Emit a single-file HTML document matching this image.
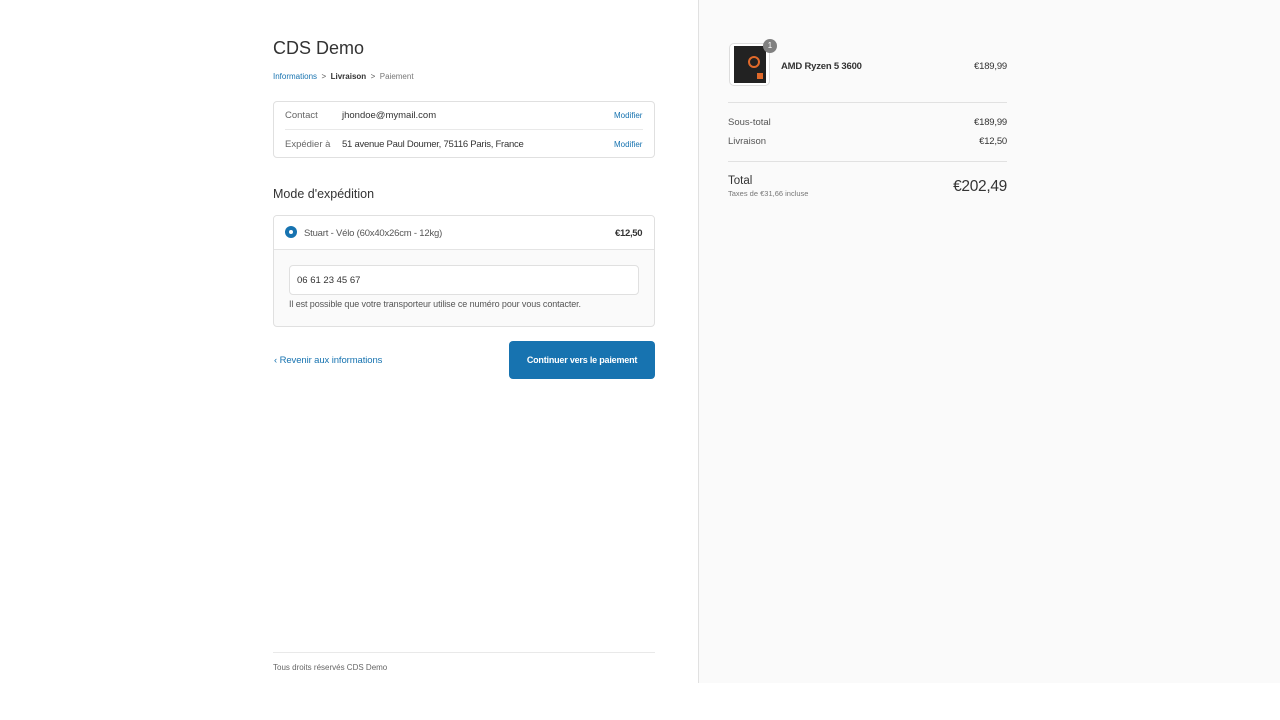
<!DOCTYPE html>
<html><head><meta charset="utf-8"><style>
*{box-sizing:border-box;margin:0;padding:0}
body{width:1280px;height:720px;background:#fff;font-family:"Liberation Sans",sans-serif;color:#333;position:relative;overflow:hidden}
.abs{position:absolute}
.right{left:698px;top:0;width:582px;height:683px;background:#fafafa;border-left:1px solid #e1e1e1}
.blue{color:#1773b0}
</style></head><body>
<div class="abs right"></div>
<div class="abs" style="left:273px;top:38px;font-size:18px;color:#333">CDS Demo</div>
<div class="abs" style="left:273px;top:72px;font-size:8px;color:#777"><span class="blue">Informations</span> &nbsp;<span style="color:#555">&gt;</span>&nbsp; <b style="color:#333">Livraison</b> &nbsp;<span style="color:#555">&gt;</span>&nbsp; Paiement</div>
<div class="abs" style="left:273px;top:101px;width:382px;height:57px;border:1px solid #e0e0e0;border-radius:4px"></div>
<div class="abs" style="left:285px;top:129px;width:358px;border-top:1px solid #e9e9e9"></div>
<div class="abs" style="left:285px;top:110px;font-size:9.5px;color:#666">Contact</div>
<div class="abs" style="left:342px;top:110px;font-size:9.5px;color:#333">jhondoe@mymail.com</div>
<div class="abs blue" style="left:614px;top:111px;font-size:8px">Modifier</div>
<div class="abs" style="left:285px;top:139px;font-size:9.5px;color:#666">Expédier à</div>
<div class="abs" style="left:342px;top:139px;font-size:9.5px;color:#333;letter-spacing:-0.25px">51 avenue Paul Doumer, 75116 Paris, France</div>
<div class="abs blue" style="left:614px;top:140px;font-size:8px">Modifier</div>
<div class="abs" style="left:273px;top:187px;font-size:12.5px;color:#333">Mode d'expédition</div>
<div class="abs" style="left:273px;top:215px;width:382px;height:112px;border:1px solid #e0e0e0;border-radius:4px;background:#fafafa;overflow:hidden">
<div style="height:34px;background:#fff;border-bottom:1px solid #e4e4e4"></div></div>
<div class="abs" style="left:285px;top:226px;width:12px;height:12px;border-radius:50%;background:#1773b0"><div style="width:4px;height:4px;background:#fff;border-radius:50%;margin:4px"></div></div>
<div class="abs" style="left:304px;top:228px;font-size:9.5px;color:#555;letter-spacing:-0.2px">Stuart - Vélo (60x40x26cm - 12kg)</div>
<div class="abs" style="left:615px;top:228px;font-size:9.5px;font-weight:bold;color:#333;letter-spacing:-0.3px">€12,50</div>
<div class="abs" style="left:289px;top:265px;width:350px;height:30px;border:1px solid #e0e0e0;border-radius:4px;background:#fff"></div>
<div class="abs" style="left:297px;top:275px;font-size:9.5px;color:#333">06 61 23 45 67</div>
<div class="abs" style="left:289px;top:299px;font-size:9px;color:#555;letter-spacing:-0.1px">Il est possible que votre transporteur utilise ce numéro pour vous contacter.</div>
<div class="abs blue" style="left:274px;top:355px;font-size:9.5px;letter-spacing:-0.1px">‹ Revenir aux informations</div>
<div class="abs" style="left:509px;top:341px;width:146px;height:38px;background:#1773b0;border-radius:4px;color:#fff;font-size:9px;font-weight:bold;text-align:center;line-height:38px;letter-spacing:-0.2px">Continuer vers le paiement</div>
<div class="abs" style="left:273px;top:652px;width:382px;border-top:1px solid #e9e9e9"></div>
<div class="abs" style="left:273px;top:663px;font-size:8px;color:#666">Tous droits réservés CDS Demo</div>

<div class="abs" style="left:729px;top:43px;width:41px;height:43px;border:1px solid #ddd;border-radius:5px;background:#fff;overflow:hidden"><div style="margin:2px 4px;width:32px;height:37px;background:#222;position:relative"><div style="position:absolute;left:14px;top:10px;width:12px;height:12px;border:2px solid #e0692a;border-radius:50%"></div><div style="position:absolute;left:23px;top:27px;width:6px;height:6px;background:#e0692a"></div></div></div>
<div class="abs" style="left:763px;top:39px;width:14px;height:14px;border-radius:50%;background:#808080;color:#fff;font-size:8px;text-align:center;line-height:14px">1</div>
<div class="abs" style="left:781px;top:61px;font-size:9.5px;font-weight:bold;color:#333;letter-spacing:-0.2px">AMD Ryzen 5 3600</div>
<div class="abs" style="left:957px;top:61px;font-size:9.5px;color:#333;width:50px;text-align:right;letter-spacing:-0.2px">€189,99</div>
<div class="abs" style="left:728px;top:102px;width:279px;border-top:1px solid #e1e1e1"></div>
<div class="abs" style="left:728px;top:117px;font-size:9.5px;color:#555">Sous-total</div>
<div class="abs" style="left:957px;top:117px;font-size:9.5px;width:50px;text-align:right;color:#333;letter-spacing:-0.2px">€189,99</div>
<div class="abs" style="left:728px;top:136px;font-size:9.5px;color:#555">Livraison</div>
<div class="abs" style="left:957px;top:136px;font-size:9.5px;width:50px;text-align:right;color:#333;letter-spacing:-0.2px">€12,50</div>
<div class="abs" style="left:728px;top:161px;width:279px;border-top:1px solid #e1e1e1"></div>
<div class="abs" style="left:728px;top:175px;font-size:11.5px;color:#333">Total</div>
<div class="abs" style="left:728px;top:189px;font-size:7.5px;color:#777">Taxes de €31,66 incluse</div>
<div class="abs" style="left:907px;top:178px;font-size:15.5px;width:100px;text-align:right;color:#333;letter-spacing:-0.3px">€202,49</div>
</body></html>
